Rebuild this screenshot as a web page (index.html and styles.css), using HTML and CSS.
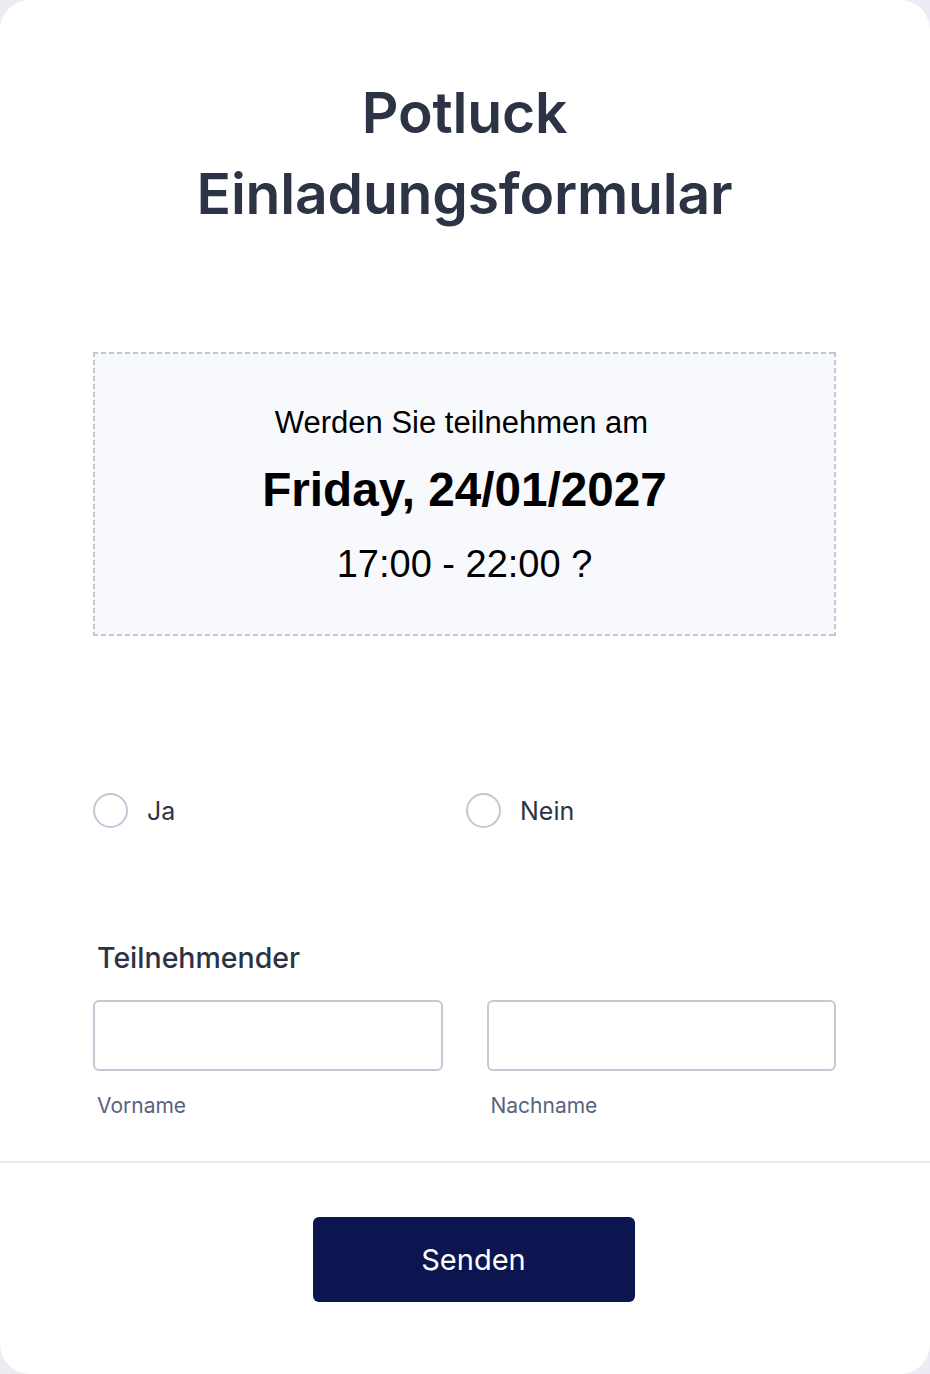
FILE: index.html
```html
<!DOCTYPE html>
<html lang="de">
<head>
<meta charset="utf-8">
<title>Potluck Einladungsformular</title>
<link rel="stylesheet" href="styles.css">
</head>
<body>
<main class="card">
  <div class="content">
    <h1 class="title">Potluck<br>Einladungsformular</h1>
    <section class="event">
      <p class="event-q">Werden Sie teilnehmen am</p>
      <p class="event-date">Friday, 24/01/2027</p>
      <p class="event-time">17:00 - 22:00 ?</p>
    </section>
    <div class="radios">
      <label class="radio"><span class="radio-circle"></span><span class="radio-label">Ja</span></label>
      <label class="radio"><span class="radio-circle"></span><span class="radio-label">Nein</span></label>
    </div>
    <div class="field">
      <div class="field-label">Teilnehmender</div>
      <div class="name-row">
        <div class="name-col">
          <div class="input"></div>
          <div class="sublabel">Vorname</div>
        </div>
        <div class="name-col">
          <div class="input"></div>
          <div class="sublabel">Nachname</div>
        </div>
      </div>
    </div>
  </div>
  <div class="footer">
    <button class="submit">Senden</button>
  </div>
</main>
</body>
</html>
```
FILE: styles.css
```css
* { box-sizing: border-box; }
html, body { margin: 0; padding: 0; }
body {
  background: #ebecf4;
  font-family: Inter, "Noto Sans", sans-serif;
  color: #2c3345;
}
.card {
  width: 930px;
  height: 1374px;
  background: #ffffff;
  border-radius: 30px;
  overflow: hidden;
  display: flex;
  flex-direction: column;
}
.content {
  padding: 0 94px 0 93px;
  height: 1163px;
  border-bottom: 2px solid #e8e8f0;
}
.title {
  margin: 0;
  padding-top: 72px;
  text-align: center;
  font-size: 57px;
  line-height: 81px;
  font-weight: 600;
  color: #2c3345;
  letter-spacing: -0.2px;
}
.event {
  margin-top: 118px;
  height: 284px;
  background-color: #f8f9fd;
  background-image:
    repeating-linear-gradient(90deg, #c3c6d3 0 5px, transparent 5px 8px),
    repeating-linear-gradient(90deg, #c3c6d3 0 5px, transparent 5px 8px),
    repeating-linear-gradient(180deg, #c3c6d3 0 5px, transparent 5px 8px),
    repeating-linear-gradient(180deg, #c3c6d3 0 5px, transparent 5px 8px);
  background-size: 100% 2px, 100% 2px, 2px 100%, 2px 100%;
  background-position: 0 0, 0 100%, 0 0, 100% 0;
  background-repeat: no-repeat;
  text-align: center;
  font-family: "Liberation Sans", Arial, sans-serif;
  color: #000;
  padding-top: 52px;
}
.event p { margin: 0; }
.event-q { font-size: 31px; line-height: 38px; padding-right: 6px; }
.event-date { font-size: 47.7px; font-weight: 700; line-height: 56px; margin-top: 20px !important; }
.event-time { font-size: 38px; line-height: 44px; margin-top: 24px !important; }
.radios {
  margin-top: 157px;
  display: grid;
  grid-template-columns: 373px 1fr;
}
.radio {
  display: flex;
  align-items: center;
  gap: 19px;
}
.radio-circle {
  width: 35px;
  height: 35px;
  border: 2px solid #c3c6d4;
  border-radius: 50%;
  background: #fff;
}
.radio-label {
  font-size: 25px;
  color: #2c3345;
}
.field { margin-top: 113px; }
.field-label {
  font-size: 28.5px;
  font-weight: 500;
  padding-left: 4px;
  line-height: 34px;
}
.name-row {
  margin-top: 25px;
  display: grid;
  grid-template-columns: 1fr 1fr;
  gap: 44px;
}
.input {
  height: 71px;
  border: 2px solid #c6c8d6;
  border-radius: 6px;
  background: #fff;
}
.sublabel {
  margin-top: 22px;
  padding-left: 4px;
  font-size: 21px;
  color: #57647e;
}
.footer {
  display: flex;
  justify-content: center;
  padding-top: 54px;
}
.submit {
  width: 322px;
  height: 85px;
  background: #0c1550;
  color: #fff;
  border: none;
  border-radius: 6px;
  font-family: Inter, "Noto Sans", sans-serif;
  font-size: 29px;
  margin-left: 17px;
}
```
